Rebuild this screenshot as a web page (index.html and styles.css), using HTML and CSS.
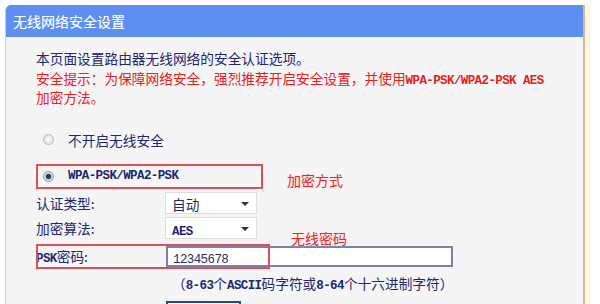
FILE: index.html
```html
<!DOCTYPE html>
<html lang="zh-CN">
<head>
    <meta charset="UTF-8">
    <title>无线网络安全设置</title>
    <link rel="stylesheet" href="styles.css">
</head>
<body>
    <div class="panel">
        <div class="panel-title">无线网络安全设置</div>
        <div class="panel-body">
            <p class="intro">本页面设置路由器无线网络的安全认证选项。</p>
            <p class="tip">安全提示：为保障网络安全，强烈推荐开启安全设置，并使用<span class="en">WPA-PSK/WPA2-PSK AES</span><br>加密方法。</p>

            <div class="option first">
                <span class="radio"></span>
                <span>不开启无线安全</span>
            </div>
            <div class="option marked">
                <span class="radio checked"></span>
                <span class="en">WPA-PSK/WPA2-PSK</span>
                <span class="note note-mode">加密方式</span>
            </div>

            <div class="field field-auth">
                <label>认证类型:</label>
                <div class="select">自动<span class="caret"></span></div>
            </div>
            <div class="field field-algo">
                <label>加密算法:</label>
                <div class="select"><span class="en">AES</span><span class="caret"></span></div>
            </div>
            <div class="field field-psk">
                <label><span class="en">PSK</span>密码:</label>
                <div class="input"><span class="en">12345678</span></div>
                <span class="note note-psk">无线密码</span>
            </div>
            <div class="hint">（<span class="en">8-63</span>个<span class="en">ASCII</span>码字符或<span class="en">8-64</span>个十六进制字符）</div>

            <div class="field field-next">
                <label class="faint">&nbsp;</label>
                <div class="select dark"></div>
            </div>
        </div>
    </div>
</body>
</html>
```

FILE: styles.css
```css
html, body {
    margin: 0;
    height: 100%;
    overflow: hidden;
    background-color: #fff;
}
body {
    font-family: "Noto Sans CJK SC", "Liberation Sans", sans-serif;
    font-size: 13.7px;
    color: #1e2770;
}
.en {
    font-family: "Liberation Mono", monospace;
    font-size: 12.5px;
    letter-spacing: -0.6px;
    font-weight: bold;
    line-height: 1;
}
.panel {
    margin: 5px 0 0 5px;
    width: 577px;
    height: 299px;
    overflow: hidden;
    background-color: #f5f5f5;
    border-left: 1px solid #e6c89c;
    border-right: 2px solid #d9b88a;
    border-top-left-radius: 5px;
    box-shadow: 6px 0 0 #fdf6ea;
}
.panel-title {
    height: 32px;
    line-height: 32px;
    padding-left: 7px;
    background-color: #5d8ef1;
    border-top-left-radius: 5px;
    color: #fff;
    font-size: 14px;
    text-shadow: 0 0 1px #9bb8f5;
}
.panel-body {
    padding: 12px 0 0 30px;
}
p {
    margin: 0;
    line-height: 19.5px;
    white-space: nowrap;
}
.tip {
    color: #e8201d;
}
.option {
    display: flex;
    align-items: center;
    height: 20px;
}
.option.first {
    margin-top: 22px;
}
.option.marked {
    position: relative;
    margin-top: 14px;
    width: 227px;
    height: 25px;
}
.option.marked::after,
.field-psk::after {
    content: "";
    position: absolute;
    left: 0;
    top: 0;
    height: 25px;
    box-sizing: border-box;
    border: 2px solid #dd5055;
}
.option.marked::after {
    width: 227px;
}
.radio {
    width: 11px;
    height: 11px;
    margin: 0 14px 0 7px;
    border-radius: 50%;
    border: 1px solid #b8b8b8;
    background: radial-gradient(circle, #fdfdfd 0, #d8d8d8 100%);
    box-sizing: border-box;
}
.radio.checked {
    border-color: #8c9aa8;
    background: radial-gradient(circle, #1f3550 0, #2c4a66 35%, #c9d3dd 50%, #e9eef2 100%);
}
.note {
    position: absolute;
    color: #e62a2a;
    font-size: 14px;
    line-height: 16px;
    white-space: nowrap;
    text-shadow: 0 0 2px #ffd4d4;
}
.note-mode {
    left: 251px;
    top: 8px;
}
.field {
    display: flex;
    align-items: center;
    height: 22px;
}
.field label {
    width: 129px;
    flex: none;
}
.field-auth {
    margin-top: 3px;
}
.field-algo {
    margin-top: 3px;
}
.select {
    position: relative;
    width: 92px;
    height: 22px;
    line-height: 22px;
    padding-left: 6px;
    box-sizing: border-box;
    background-color: #fff;
    border: 1px solid #dedede;
}
.caret {
    position: absolute;
    right: 7px;
    top: 9px;
    border-left: 4px solid transparent;
    border-right: 4px solid transparent;
    border-top: 4px solid #333;
}
.field-psk {
    position: relative;
    margin-top: 5px;
    height: 25px;
}
.field-psk::after {
    width: 234px;
}
.field-psk label {
    width: 130px;
}
.input {
    width: 287px;
    height: 21px;
    line-height: 19px;
    padding-left: 5px;
    box-sizing: border-box;
    background-color: #fff;
    border: 2px solid #7a80b0;
}
.input .en {
    font-weight: normal;
    color: #2a2f60;
}
.note-psk {
    left: 255px;
    top: -14px;
}
.hint {
    margin: 5px 0 0 136px;
    line-height: 18px;
    white-space: nowrap;
}
.field-next {
    margin-top: 9px;
}
.faint {
    color: #ccc;
}
.select.dark {
    width: 75px;
    margin-left: 1px;
    border: 2px solid #33438a;
}
```
